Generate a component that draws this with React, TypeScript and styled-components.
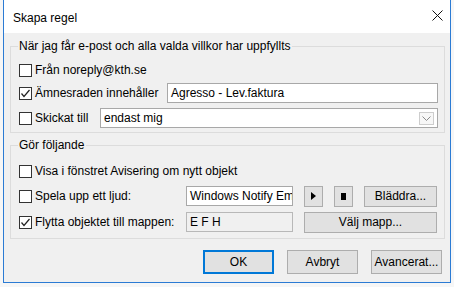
import styled, { createGlobalStyle } from "styled-components";

const GlobalStyle = createGlobalStyle`
  html, body {
    margin: 0;
    padding: 0;
    background: #f6f6f6;
  }
  body {
    font-family: "Liberation Sans", Arial, sans-serif;
    font-size: 12px;
    color: #000;
  }
`;

function CheckMark() {
  return (
    <svg width="11" height="11" viewBox="0 0 11 11">
      <polyline
        points="1.5,5.5 4,8.5 9.5,2"
        fill="none"
        stroke="#222"
        strokeWidth="1.2"
      />
    </svg>
  );
}

function CheckBox({ checked }: { checked?: boolean }) {
  return <Box>{checked && <CheckMark />}</Box>;
}

function App() {
  return (
    <>
      <GlobalStyle />
      <Window>
        <TitleBar>
          <Title>Skapa regel</Title>
          <CloseButton>
            <svg width="11" height="11" viewBox="0 0 11 11">
              <path d="M0.5 0.5 L10.5 10.5 M10.5 0.5 L0.5 10.5" stroke="#111" strokeWidth="1" />
            </svg>
          </CloseButton>
        </TitleBar>
        <Body>
          <Group $bottom={4}>
            <Legend>När jag får e-post och alla valda villkor har uppfyllts</Legend>
            <Row $top={6}>
              <CheckBox />
              <Label>Från noreply@kth.se</Label>
            </Row>
            <Row $top={3}>
              <CheckBox checked />
              <Label $width={132}>Ämnesraden innehåller</Label>
              <TextBox $width={271}>Agresso - Lev.faktura</TextBox>
            </Row>
            <Row $top={5}>
              <CheckBox />
              <Label $width={65}>Skickat till</Label>
              <Combo>
                <span>endast mig</span>
                <DropButton>
                  <svg width="9" height="5" viewBox="0 0 9 5">
                    <polyline points="0.5,0.5 4.5,4.5 8.5,0.5" fill="none" stroke="#8a8a8a" strokeWidth="1" />
                  </svg>
                </DropButton>
              </Combo>
            </Row>
          </Group>
          <Group $top={5} $bottom={6}>
            <Legend>Gör följande</Legend>
            <Row $top={8}>
              <CheckBox />
              <Label>Visa i fönstret Avisering om nytt objekt</Label>
            </Row>
            <Row $top={5}>
              <CheckBox />
              <Label $width={151}>Spela upp ett ljud:</Label>
              <TextBox $width={107}>Windows Notify Em</TextBox>
              <Button $width={19} $left={11}>
                <svg width="5" height="8" viewBox="0 0 5 8">
                  <polygon points="0,0 5,4 0,8" fill="#000" />
                </svg>
              </Button>
              <Button $width={19} $left={11}>
                <svg width="5" height="7" viewBox="0 0 5 7">
                  <rect width="5" height="7" fill="#000" />
                </svg>
              </Button>
              <Button $width={73} $left={11}>Bläddra...</Button>
            </Row>
            <Row $top={6}>
              <CheckBox checked />
              <Label $width={151}>Flytta objektet till mappen:</Label>
              <TextBox $width={107} $readOnly>E F H</TextBox>
              <Button $width={133} $left={11}>Välj mapp...</Button>
            </Row>
          </Group>
          <Footer>
            <Button $width={71} $default>OK</Button>
            <Button $width={71}>Avbryt</Button>
            <Button $width={71}>Avancerat...</Button>
          </Footer>
        </Body>
      </Window>
    </>
  );
}

const Window = styled.div`
  margin-left: 3px;
  width: 446px;
  height: 282px;
  border: 1px solid #2b7bd4;
  border-top: 0;
  display: flex;
  flex-direction: column;
  background: #f0f0f0;
`;

const TitleBar = styled.div`
  height: 33px;
  background: #fff;
  display: flex;
  align-items: center;
  justify-content: space-between;
  padding: 0 7px 0 9px;
  flex-shrink: 0;
`;

const Title = styled.div`
  font-size: 12px;
  padding-top: 2px;
`;

const CloseButton = styled.div`
  width: 11px;
  height: 11px;
  margin-top: -2px;
  display: flex;
`;

const Body = styled.div`
  flex: 1;
  padding: 6px 5px 0 6px;
  display: flex;
  flex-direction: column;
`;

const Group = styled.fieldset<{ $top?: number; $bottom?: number }>`
  margin: ${(p) => p.$top ?? 0}px 0 0 0;
  padding: 0 6px ${(p) => p.$bottom ?? 0}px 7px;
  border: 1px solid #dcdcdc;
  min-width: 0;
`;

const Legend = styled.legend`
  padding: 0 2px 0 1px;
  line-height: 15px;
  font-size: 12px;
`;

const Row = styled.div<{ $top?: number }>`
  display: flex;
  align-items: center;
  height: 20px;
  margin-top: ${(p) => p.$top ?? 0}px;
  padding-left: 1px;
`;

const Box = styled.div`
  width: 11px;
  height: 11px;
  border: 1px solid #333;
  background: #fff;
  display: flex;
  align-items: center;
  justify-content: center;
  flex-shrink: 0;
`;

const Label = styled.span<{ $width?: number }>`
  margin-left: 3px;
  white-space: nowrap;
  ${(p) => (p.$width ? `width: ${p.$width}px;` : "")}
  flex-shrink: 0;
`;

const TextBox = styled.div<{ $width: number; $readOnly?: boolean }>`
  width: ${(p) => p.$width}px;
  height: 20px;
  box-sizing: border-box;
  border: 1px solid ${(p) => (p.$readOnly ? "#b8b8b8" : "#a8a8a8")};
  background: ${(p) => (p.$readOnly ? "#f0f0f0" : "#fff")};
  padding: 0 3px;
  display: flex;
  align-items: center;
  white-space: nowrap;
  overflow: hidden;
  flex-shrink: 0;
`;

const Combo = styled.div`
  width: 338px;
  height: 20px;
  box-sizing: border-box;
  border: 1px solid #a8a8a8;
  background: #fff;
  padding: 0 3px 0 3px;
  display: flex;
  align-items: center;
  justify-content: space-between;
`;

const DropButton = styled.div`
  width: 15px;
  height: 13px;
  box-sizing: border-box;
  border: 1px solid #cdcdcd;
  background: #f7f7f7;
  display: flex;
  align-items: center;
  justify-content: center;
`;

const Button = styled.div<{ $width: number; $left?: number; $default?: boolean }>`
  width: ${(p) => p.$width}px;
  height: 21px;
  margin-left: ${(p) => p.$left ?? 0}px;
  box-sizing: border-box;
  border: 1px solid #adadad;
  ${(p) => (p.$default ? "box-shadow: inset 0 0 0 1px #0078d7; border-color: #0078d7;" : "")}
  background: #e1e1e1;
  display: flex;
  align-items: center;
  justify-content: center;
  white-space: nowrap;
  flex-shrink: 0;
`;

const Footer = styled.div`
  display: flex;
  justify-content: flex-end;
  gap: 13px;
  margin-top: 11px;
  padding-right: 3px;
  & > div {
    height: 24px;
  }
`;

export default App;
